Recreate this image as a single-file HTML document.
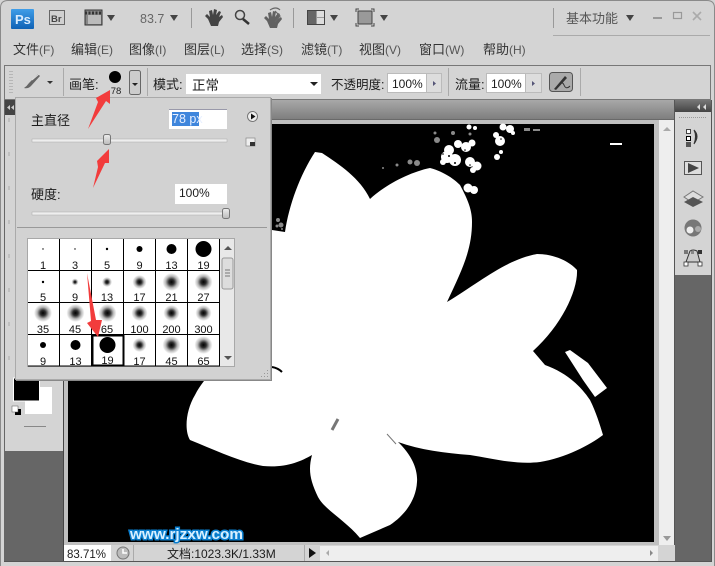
<!DOCTYPE html>
<html><head><meta charset="utf-8"><style>
html,body{margin:0;padding:0;background:#d4d4d4}
svg{display:block}
text{font-family:"Liberation Sans","Noto Sans CJK SC",sans-serif;font-size:12px;fill:#1c1c1c}
.m{font-size:13px;fill:#333}
.l{font-size:11px;text-anchor:middle;fill:#111}
</style></head><body>
<svg width="715" height="566" viewBox="0 0 715 566" xmlns="http://www.w3.org/2000/svg">
<defs>
<linearGradient id="tab" x1="0" y1="0" x2="0" y2="1"><stop offset="0" stop-color="#a8a8a8"/><stop offset="1" stop-color="#7c7c7c"/></linearGradient>
<linearGradient id="dk" x1="0" y1="0" x2="0" y2="1"><stop offset="0" stop-color="#777"/><stop offset="1" stop-color="#444"/></linearGradient>
<linearGradient id="ps" x1="0" y1="0" x2="0" y2="1"><stop offset="0" stop-color="#3f9de8"/><stop offset="1" stop-color="#0f62b5"/></linearGradient>
<linearGradient id="btn" x1="0" y1="0" x2="0" y2="1"><stop offset="0" stop-color="#eee"/><stop offset="1" stop-color="#bbb"/></linearGradient>
<radialGradient id="s"><stop offset="0" stop-color="#000"/><stop offset=".3" stop-color="#000" stop-opacity=".82"/><stop offset=".65" stop-color="#000" stop-opacity=".28"/><stop offset="1" stop-color="#000" stop-opacity="0"/></radialGradient>
<g id="hand"><path d="M3 10 L0 7 L2 5 L5 8 L4 2 L7 1 L8 6 L9 0 L12 1 L11 6 L14 2 L16 3 L14 8 L17 6 L18 8 L14 13 L13 17 L6 17 Z" fill="#444"/></g>
</defs>
<rect width="715" height="566" fill="#d4d4d4"/>
<!-- window outline -->
<path d="M0.500 566 V8 Q0.500 .5 8 .5 H707 Q714.500 .5 714.500 8 V566" fill="none" stroke="#8a8a8a"/>
<!-- title bar -->
<rect x="11" y="9" width="23" height="20" rx="1" fill="url(#ps)"/>
<text x="15" y="24" style="font-size:13px;font-weight:bold;fill:#d8ecff">Ps</text>
<rect x="49.500" y="10.500" width="15" height="14" fill="#d0d0d0" stroke="#666"/>
<text x="51" y="22" style="font-size:9.500px;font-weight:bold;fill:#444">Br</text>
<rect x="85" y="10" width="17" height="15" fill="#888" stroke="#333"/>
<path d="M85 13H102" stroke="#333" stroke-width="3" stroke-dasharray="2 1.500"/>
<rect x="88" y="15" width="13" height="9" fill="#bbb"/>
<path d="M107 15h8l-4 6z" fill="#444"/>
<text x="140" y="23" style="font-size:12.500px;fill:#666">83.7</text>
<path d="M170 15h8l-4 6z" fill="#444"/>
<path d="M191.500 8V28M293.500 8V28M553.500 8V28" stroke="#999"/>
<use href="#hand" x="205" y="9"/>
<circle cx="240" cy="15" r="4.500" fill="none" stroke="#444" stroke-width="1.500"/>
<path d="M243 19L249 24" stroke="#333" stroke-width="2.500"/>
<use href="#hand" x="264" y="11" opacity=".8"/>
<path d="M270 10Q276 6 280 10M275 11L280 16L275 22" fill="none" stroke="#666" stroke-width="1.200"/>
<rect x="307.500" y="10.500" width="17" height="14" fill="#999" stroke="#444"/>
<rect x="308" y="11" width="8" height="13" fill="#666"/><rect x="317" y="11" width="7" height="6" fill="#ddd"/><rect x="317" y="18" width="7" height="6" fill="#ddd"/>
<path d="M330 15h8l-4 6z" fill="#444"/>
<path d="M356 12V9H359M371 9H374V12M356 23V26H359M371 26H374V23" fill="none" stroke="#444"/>
<rect x="358" y="11" width="14" height="13" fill="#999" stroke="#444"/>
<path d="M380 15h8l-4 6z" fill="#444"/>
<text x="566" y="23" style="font-size:13px;fill:#555">基本功能</text>
<path d="M626 15h8l-4 6z" fill="#444"/>
<path d="M653 18H662" stroke="#999" stroke-width="2"/>
<rect x="673.500" y="12.500" width="8" height="6" fill="none" stroke="#999" stroke-width="1.200"/>
<path d="M693 12L701 20M701 12L693 20" stroke="#aaa" stroke-width="1.600"/>
<path d="M553 35.500H710" stroke="#aaa"/>
<!-- menu -->
<text class="m" x="13" y="54">文件<tspan style="font-size:12px;fill:#555">(F)</tspan></text>
<text class="m" x="71" y="54">编辑<tspan style="font-size:12px;fill:#555">(E)</tspan></text>
<text class="m" x="129" y="54">图像<tspan style="font-size:12px;fill:#555">(I)</tspan></text>
<text class="m" x="184" y="54">图层<tspan style="font-size:12px;fill:#555">(L)</tspan></text>
<text class="m" x="241" y="54">选择<tspan style="font-size:12px;fill:#555">(S)</tspan></text>
<text class="m" x="301" y="54">滤镜<tspan style="font-size:12px;fill:#555">(T)</tspan></text>
<text class="m" x="359" y="54">视图<tspan style="font-size:12px;fill:#555">(V)</tspan></text>
<text class="m" x="419" y="54">窗口<tspan style="font-size:12px;fill:#555">(W)</tspan></text>
<text class="m" x="483" y="54">帮助<tspan style="font-size:12px;fill:#555">(H)</tspan></text>
<!-- options bar -->
<rect x="4.500" y="65.500" width="706" height="34" fill="#d4d4d4" stroke="#777"/>
<path d="M10 71V94M12 71V94" stroke="#999" stroke-dasharray="1 2"/>
<path d="M24 88Q27 86 29 83L38 74L40 76L31 86Q28 89 24 88Z" fill="#666"/><path d="M32 80L39 74" stroke="#ddd"/>
<path d="M47 81h6l-3 3z" fill="#333"/>
<path d="M63.500 68V96M147.500 68V96M448.500 68V96M580.500 68V96" stroke="#aaa"/>
<text x="69" y="89" style="font-size:13px">画笔:</text>
<circle cx="115" cy="77" r="6" fill="#000"/>
<text x="116" y="94" style="font-size:9.500px;text-anchor:middle">78</text>
<rect x="129.500" y="70.500" width="11" height="24" rx="2" fill="#ccc" stroke="#666"/>
<path d="M132 83h6l-3 3z" fill="#222"/>
<text x="153" y="89" style="font-size:13px">模式:</text>
<rect x="186" y="74" width="135" height="20" fill="#fff"/>
<text x="192" y="90" style="font-size:13.500px">正常</text>
<path d="M310 82h8l-4 4z" fill="#222"/>
<text x="331" y="89" style="font-size:12.500px">不透明度:</text>
<rect x="387" y="73" width="55" height="20" fill="#bbb"/>
<rect x="388" y="74" width="38" height="18" fill="#fff"/>
<rect x="427" y="74" width="14" height="18" fill="#ddd"/>
<text x="392" y="88" style="font-size:12px">100%</text>
<path d="M433 81l3 2.500-3 2.500z" fill="#557"/>
<text x="455" y="89" style="font-size:13px">流量:</text>
<rect x="486" y="73" width="56" height="20" fill="#bbb"/>
<rect x="487" y="74" width="38" height="18" fill="#fff"/>
<rect x="526" y="74" width="15" height="18" fill="#ddd"/>
<text x="491" y="88" style="font-size:12px">100%</text>
<path d="M532 81l3 2.500-3 2.500z" fill="#557"/>
<rect x="549.500" y="72.500" width="23" height="19" rx="3" fill="#aaa" stroke="#555"/>
<path d="M554 89L565 76L567 78L556 90Z" fill="#333"/>
<path d="M558 87Q562 80 564 85Q566 90 570 86" fill="none" stroke="#333"/>
<!-- tab bar -->
<rect x="5" y="100" width="669" height="20" fill="url(#tab)"/>
<rect x="5" y="100" width="11" height="15" fill="#444"/>
<path d="M10 105L7 107.500L10 110ZM14 105L11 107.500L14 110Z" fill="#ccc"/>
<rect x="64" y="119.500" width="611" height="1" fill="#555"/>
<!-- canvas strip -->
<rect x="64" y="120" width="595" height="425" fill="#c0c0c0"/>
<rect x="659" y="120" width="15" height="425" fill="#eee"/>
<path d="M663 131l4-4 4 4z" fill="#aaa"/>
<path d="M663 536l4 5 4-5z" fill="#999"/>
<rect x="68" y="124" width="586" height="418" fill="#000"/>
<!-- speckle -->
<g fill="#fff">
<circle cx="447" cy="157" r="6"/><circle cx="455" cy="160" r="6"/><circle cx="449" cy="150" r="5"/><circle cx="443" cy="162" r="3"/>
<circle cx="458" cy="144" r="4"/><circle cx="466" cy="147" r="5"/><circle cx="472" cy="143" r="3.500"/>
<circle cx="470" cy="162" r="5"/><circle cx="477" cy="166" r="4.500"/><circle cx="473" cy="170" r="3"/>
<circle cx="500" cy="141" r="5"/><circle cx="496" cy="135" r="3"/><circle cx="503" cy="127" r="3.500"/><circle cx="510" cy="129" r="4"/><circle cx="513" cy="133" r="2"/>
<circle cx="497" cy="157" r="3"/><circle cx="501" cy="152" r="2"/>
<circle cx="468" cy="188" r="4.500"/><circle cx="474" cy="190" r="4"/><circle cx="469" cy="127" r="2.500"/><circle cx="475" cy="128" r="2"/>
<rect x="610" y="143" width="12" height="2"/>
</g>
<g fill="#000"><circle cx="449" cy="156" r="1"/><circle cx="455" cy="163" r="1"/><circle cx="443" cy="154" r=".8"/><circle cx="470" cy="165" r=".8"/><circle cx="501" cy="139" r=".8"/><circle cx="465" cy="150" r=".8"/></g>
<g fill="#8a8a8a">
<circle cx="417" cy="163" r="3"/><circle cx="410" cy="162" r="2.500"/><circle cx="397" cy="165" r="1.500"/><circle cx="383" cy="168" r="1"/>
<circle cx="278" cy="220" r="2"/><circle cx="281" cy="225" r="2.500"/><circle cx="277" cy="226" r="1.500"/><circle cx="282" cy="229" r="1"/>
<circle cx="437" cy="140" r="3"/><circle cx="435" cy="133" r="1.500"/><circle cx="453" cy="133" r="2"/><circle cx="470" cy="134" r="1.500"/>
<rect x="524" y="128" width="6" height="3"/><rect x="533" y="129" width="7" height="2"/>
</g>
<!-- flower -->
<path fill="#fff" d="M285 232C289 205 300 175 315 152L322 153C340 165 360 178 370 199C385 185 410 172 430 168C445 172 455 180 460 185C468 200 472 210 472 222C472 250 462 270 447 302C480 282 505 260 537 254C555 254 570 262 577 270C578 290 562 325 533 351L545 365C565 372 580 385 590 400C596 412 600 425 603 435C590 445 565 458 540 462C515 465 490 458 470 455C445 453 420 450 398 442C412 455 418 470 417 482C416 500 405 515 390 525L360 538C345 520 325 510 318 497C310 480 308 470 312 455C300 462 285 468 263 466C240 462 215 450 190 440C184 430 186 410 195 395C200 385 207 377 215 368L272 300L272 230Z"/>
<path fill="#fff" d="M565 352L570 350L588 363L607 388L595 397L583 380Z"/>
<path d="M332 430L338 419" stroke="#777" stroke-width="3"/>
<path d="M387 434L396 444" stroke="#777"/>
<path d="M272 367Q278 368 282 372" fill="none" stroke="#000" stroke-width="2"/>
<!-- watermark -->
<text x="130" y="539" textLength="113" lengthAdjust="spacingAndGlyphs" style="font-size:15px;font-weight:bold;fill:#d8f0ff;stroke:#0a7fd0;stroke-width:3;paint-order:stroke">www.rjzxw.com</text>
<!-- left toolbar -->
<rect x="5" y="115" width="58" height="336" fill="#d4d4d4"/>
<path d="M9 118V370" stroke="#aaa" stroke-dasharray="4 30"/>
<rect x="5" y="451" width="58" height="110" fill="#666"/>
<path d="M63.500 100V561" stroke="#444"/>
<path d="M4.500 100V562" stroke="#666"/>
<rect x="25" y="387" width="27" height="27" fill="#fff"/>
<rect x="13.500" y="378" width="26" height="23" fill="#000" stroke="#fff"/>
<rect x="15" y="409" width="6" height="6" fill="#000"/><rect x="12" y="406" width="6" height="6" fill="#fff" stroke="#555" stroke-width=".5"/>
<path d="M24 426.500H46" stroke="#888"/>
<!-- right panel -->
<rect x="675" y="100" width="36" height="12" fill="url(#dk)"/>
<path d="M700 105l-3 3 3 3zM706 105l-3 3 3 3z" transform="translate(0,-1)" fill="#ddd"/>
<rect x="675" y="112" width="36" height="163" fill="#d4d4d4"/>
<rect x="675" y="275" width="36" height="286" fill="#666"/>
<path d="M674.500 100V562M711.500 100V562" stroke="#555"/>
<path d="M679 117.500H707" stroke="#999" stroke-dasharray="1 1"/>
<rect x="686.500" y="129.500" width="4" height="4" fill="#fff" stroke="#444"/>
<rect x="686.500" y="136.500" width="4" height="4" fill="#fff" stroke="#000"/>
<rect x="686" y="142" width="5" height="5" fill="#555"/>
<path d="M694 130Q700 136 694 144Q697 136 694 130Z" fill="#333" stroke="#333"/>
<rect x="684.500" y="161.500" width="17" height="13" fill="#ddd" stroke="#555"/>
<path d="M688 163V173L699 168Z" fill="#444"/>
<path d="M684 197L693 191L703 197L693 203Z" fill="#ddd" stroke="#777"/>
<path d="M684 202L693 197L703 202L693 207Z" fill="#555"/>
<circle cx="693" cy="228" r="8.500" fill="#777"/><circle cx="690" cy="230" r="3.500" fill="#eee"/><circle cx="698" cy="229" r="3" fill="#aaa"/>
<path d="M686 262L690 251Q693 249 697 251L700 262Z" fill="#ccc" stroke="#333"/>
<rect x="684" y="262" width="4" height="4" fill="#fff" stroke="#333" stroke-width=".8"/><rect x="698" y="262" width="4" height="4" fill="#fff" stroke="#333" stroke-width=".8"/>
<rect x="684" y="250" width="4" height="4" fill="#777"/><rect x="698" y="250" width="4" height="4" fill="#333"/><rect x="691" y="251" width="3" height="3" fill="#888"/>
<!-- status bar -->
<rect x="64" y="545" width="611" height="16" fill="#d4d4d4"/>
<rect x="64" y="545" width="47" height="16" fill="#fff"/>
<text x="67" y="558" style="font-size:11.500px">83.71%</text>
<rect x="117" y="547" width="12" height="12" rx="6" fill="#bbb" stroke="#777"/>
<path d="M123 549V553H127" stroke="#fff" fill="none" stroke-width="1.500"/>
<path d="M133.500 545V561M304.500 545V561" stroke="#aaa"/>
<text x="167" y="558" style="font-size:12px">文档:1023.3K/1.33M</text>
<path d="M309 548L316 553L309 558Z" fill="#111"/>
<rect x="320" y="546" width="338" height="15" fill="#eee"/>
<path d="M329 550l-3 3 3 3z" fill="#aaa"/><path d="M650 550l3 3-3 3z" fill="#888"/>
<path d="M4 561.500H711" stroke="#555"/>
<!-- popup -->
<rect x="15.500" y="97.500" width="255" height="282" fill="#d2d2d2" stroke="#aaa"/>
<path d="M271.500 98V380.500H16" fill="none" stroke="#888"/>
<text x="31" y="125" style="font-size:13px">主直径</text>
<rect x="169" y="109" width="58" height="20" fill="#fff"/><path d="M169 109.500H227" stroke="#99a"/>
<rect x="172" y="112" width="27" height="14" fill="#3f86dc"/>
<text x="172" y="123" style="font-size:12.500px;fill:#e8f0ff">78 px</text>
<circle cx="252.500" cy="116.500" r="5" fill="#eee" stroke="#777"/>
<path d="M251 113.500L255.500 116.500L251 119.500Z" fill="#111"/>
<rect x="246" y="138" width="9" height="8" fill="#eee" stroke="#888" stroke-width=".7"/>
<path d="M250 142h5v4h-5z" fill="#333"/>
<rect x="32" y="139" width="195" height="3" fill="#eee" stroke="#aaa" stroke-width=".5"/>
<rect x="103.500" y="134.500" width="7" height="10" rx="2" fill="url(#btn)" stroke="#777"/>
<text x="31" y="199" style="font-size:13px">硬度:</text>
<rect x="175" y="184" width="52" height="20" fill="#fff"/>
<text x="179" y="197" style="font-size:12px">100%</text>
<rect x="32" y="212" width="195" height="3" fill="#eee" stroke="#aaa" stroke-width=".5"/>
<rect x="222.500" y="208.500" width="7" height="10" rx="2" fill="url(#btn)" stroke="#777"/>
<path d="M17 227.500H267" stroke="#999"/>
<!-- brush grid -->
<rect x="27" y="238" width="208" height="129" fill="#a8a8a8"/>
<rect x="28" y="239" width="192" height="127" fill="#fff"/>
<path d="M59.500 239V366M91.500 239V366M123.500 239V366M155.500 239V366M187.500 239V366M219.500 239V366M28 270.500H220M28 302.500H220M28 334.500H220M28 366H220" stroke="#000"/>
<rect x="220" y="239" width="14" height="127" fill="#e8e8e8"/>
<path d="M224 250l4-4 4 4z" fill="#555"/><path d="M224 356l4 4 4-4z" fill="#555"/>
<rect x="222" y="258" width="11" height="31" rx="2" fill="#ddd" stroke="#999"/>
<path d="M225 270H230M225 273H230M225 276H230" stroke="#777"/>
<g fill="#000">
<circle cx="43" cy="249" r=".7"/><circle cx="75" cy="249" r=".7"/><circle cx="107" cy="249" r="1.200"/><circle cx="139.500" cy="249" r="3"/><circle cx="171.500" cy="249" r="5"/><circle cx="203.500" cy="249" r="8"/>
<circle cx="43" cy="282" r="1.200"/>
<circle cx="43" cy="345" r="3"/><circle cx="75.500" cy="345" r="5"/><circle cx="107.500" cy="345" r="8"/>
</g>
<g fill="url(#s)">
<circle cx="75" cy="282" r="3.500"/><circle cx="107" cy="282" r="5"/><circle cx="139.500" cy="282" r="7"/><circle cx="171.500" cy="282" r="9"/><circle cx="203.500" cy="282" r="9"/>
<circle cx="43" cy="313" r="9"/><circle cx="75.500" cy="313" r="9"/><circle cx="107.500" cy="313" r="9"/><circle cx="139.500" cy="313" r="8"/><circle cx="171.500" cy="313" r="8"/><circle cx="203.500" cy="313" r="8"/>
<circle cx="139.500" cy="345" r="7"/><circle cx="171.500" cy="345" r="9"/><circle cx="203.500" cy="345" r="9"/>
</g>
<g>
<text class="l" x="43" y="269">1</text><text class="l" x="75" y="269">3</text><text class="l" x="107" y="269">5</text><text class="l" x="139.500" y="269">9</text><text class="l" x="171.500" y="269">13</text><text class="l" x="203.500" y="269">19</text>
<text class="l" x="43" y="301">5</text><text class="l" x="75" y="301">9</text><text class="l" x="107" y="301">13</text><text class="l" x="139.500" y="301">17</text><text class="l" x="171.500" y="301">21</text><text class="l" x="203.500" y="301">27</text>
<text class="l" x="43" y="333">35</text><text class="l" x="75" y="333">45</text><text class="l" x="107" y="333">65</text><text class="l" x="139.500" y="333">100</text><text class="l" x="171.500" y="333">200</text><text class="l" x="203.500" y="333">300</text>
<text class="l" x="43" y="365">9</text><text class="l" x="75.500" y="365">13</text><text class="l" x="107.500" y="364">19</text><text class="l" x="139.500" y="365">17</text><text class="l" x="171.500" y="365">45</text><text class="l" x="203.500" y="365">65</text>
</g>
<rect x="92.500" y="335.500" width="31" height="30" fill="none" stroke="#000" stroke-width="2"/>
<path d="M261 376h1v1h-1zM264 373h1v1h-1zM264 376h1v1h-1zM267 370h1v1h-1zM267 373h1v1h-1zM267 376h1v1h-1z" fill="#999"/>
<!-- red arrows -->
<g fill="#f23c3c">
<path d="M110 90L110 104L106 101L88 129L98 102L96 98Z"/>
<path d="M109 149L109 163L105 163L93 188L98 167L97 161Z"/>
<path d="M87 273L96 320L102 320L98 337L87 323L91 321Z"/>
</g>
</svg>
</body></html>
